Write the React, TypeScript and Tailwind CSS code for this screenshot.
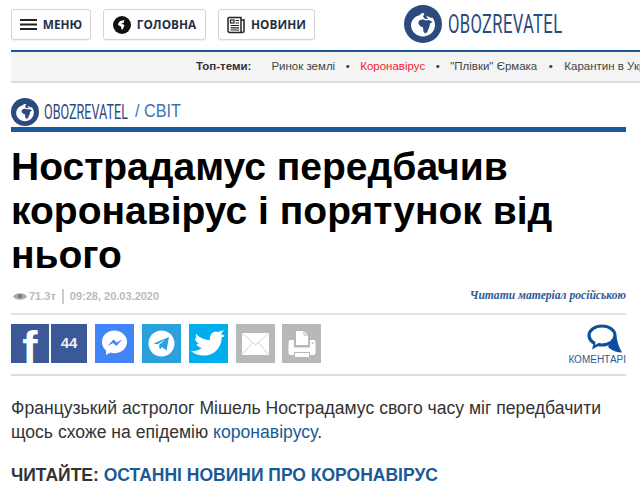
const arial = "font-['Liberation_Sans',Arial,sans-serif]"

function GlobeLogo({ className }: { className: string }) {
  return (
    <svg viewBox="0 0 38 38" className={className}>
      <circle cx="19" cy="19" r="19" fill="#2b4a7d" />
      <path
        d="M12 11.500c-3 2-5 5-5 8.500 0 6.500 5.500 11.500 12 11.500s12-5 12-11.500c0-3-1-5.500-2.800-7.500-1.200.5-2 .5-2.700-.5-1.500-.2-2.500-1-3-2.500-1.500 0-2.500-.5-3-1.500-1.500 0-3 .5-3.500 2-1.500.5-2.500 1-4 1.500z"
        fill="#fff"
      />
      <path
        d="M14.500 17c1-2.500 3.500-2.500 5-2.500l2 1 3.500-.5 3.500 2-2.500 1.500-.5 3-2.500 6-2 .8-1.500-1.500-.5-4.500-2.500-.8-2-2.500z"
        fill="#2b4a7d"
      />
      <path d="M19 11.500l2-3 2.500 1-1 2.500 2 1.500-3.500.5z" fill="#2b4a7d" />
    </svg>
  )
}

function NewspaperIcon() {
  return (
    <svg viewBox="0 0 18 18" className="w-[18px] h-[18px]" fill="none" stroke="#222" strokeWidth="1.500">
      <path d="M2 1.500h12v13.500a1.500 1.500 0 0 0 1.500 1.500H3a2 2 0 0 1-2-2V2.500a1 1 0 0 1 1-1z" />
      <path d="M14 4h3v11a1.500 1.500 0 0 1-1.500 1.500" />
      <rect x="3.500" y="4" width="3.500" height="3" strokeWidth="1.200" />
      <path d="M8.500 4.500h3.500M8.500 7h3.500M3.500 9.500h8.500M3.500 11.800h8.500M3.500 14h8.500" strokeWidth="1.200" />
    </svg>
  )
}

function NavButton({ width, icon, label }: { width: string; icon: React.ReactNode; label: string }) {
  return (
    <div className={`${width} h-[31px] flex items-center justify-center gap-[6px] border border-[#d4d4d4] rounded-[3px] bg-white text-[11.800px] font-bold text-[#1f2f45] font-['Open_Sans',sans-serif] shadow-[0_1px_1px_rgba(0,0,0,0.06)]`}>
      {icon}
      <span>{label}</span>
    </div>
  )
}

function ShareTile({ bg, width = 'w-[39px]', children }: { bg: string; width?: string; children: React.ReactNode }) {
  return <div className={`${bg} ${width} h-[39px] flex items-center justify-center overflow-hidden`}>{children}</div>
}

export default function App() {
  return (
    <div className={`w-[640px] h-[497px] overflow-hidden bg-white ${arial}`}>
      <header className="h-[50px] pl-[11px] pt-[9px] flex items-start">
        <div className="flex gap-[12px]">
          <NavButton
            width="w-[80px]"
            icon={
              <svg viewBox="0 0 17 11" className="w-[17px] h-[11px]" fill="#222">
                <rect width="17" height="2" />
                <rect y="4.500" width="17" height="2" />
                <rect y="9" width="17" height="2" />
              </svg>
            }
            label="МЕНЮ"
          />
          <NavButton
            width="w-[103px]"
            icon={
              <svg viewBox="0 0 18 18" className="w-[18px] h-[18px]">
                <circle cx="9" cy="9" r="9" fill="#111" />
                <path d="M5 9c0-2.500 2-4.500 5-4.500l1.500-1-1 3.500-2.500.5 3.500 1.500-1.500 4-1.500.5-.5-3z" fill="#fff" />
              </svg>
            }
            label="ГОЛОВНА"
          />
          <NavButton width="w-[97px]" icon={<NewspaperIcon />} label="НОВИНИ" />
        </div>
        <div className="ml-[89px] -mt-[4px] flex items-center gap-[6px]">
          <GlobeLogo className="w-[38px] h-[38px] shrink-0" />
          <span className="block w-[114px] text-[26px] leading-[38px] text-[#2b4a7d] font-['Roboto',sans-serif] tracking-[0.5px] origin-left scale-x-[0.64] whitespace-nowrap">
            OBOZREVATEL
          </span>
        </div>
      </header>

      <nav className="ml-[11px] h-[33px] border-t-2 border-t-[#1a5a96] border-b-2 border-b-[#dedede] bg-[#f4f4f4] flex items-center pl-[185px] text-[11.500px] text-[#444] whitespace-nowrap overflow-hidden">
        <span className="font-bold text-[#333] mr-[20px]">Топ-теми:</span>
        <span>Ринок землі</span>
        <span className="mx-[10.500px] text-[#333]">•</span>
        <span className="text-[#f5222d]">Коронавірус</span>
        <span className="mx-[10.500px] text-[#333]">•</span>
        <span>"Плівки" Єрмака</span>
        <span className="mx-[11.500px] text-[#333]">•</span>
        <span>Карантин в Україні</span>
      </nav>

      <main className="pr-[14px] pl-[11px]">
        <div className="mt-[13px] h-[31px] flex items-center">
          <GlobeLogo className="w-[28px] h-[28px] shrink-0" />
          <span className="ml-[5px] block w-[86px] text-[20px] text-[#2b4a7d] font-['Roboto',sans-serif] origin-left scale-x-[0.63] whitespace-nowrap">
            OBOZREVATEL
          </span>
          <span className="ml-[5px] block w-[45px] text-[18px] text-[#3f74b0] origin-left scale-x-[0.9] whitespace-nowrap">
            / СВІТ
          </span>
        </div>
        <div className="h-[5px] bg-[#1a5a96]" />

        <h1 className="mt-[13px] text-[39px] leading-[44px] font-bold text-black">
          Нострадамус передбачив коронавірус і порятунок від нього
        </h1>

        <div className="mt-[10px] flex items-center justify-between h-[18px]">
          <div className="flex items-center text-[11px] font-bold text-[#bbb]">
            <svg viewBox="0 0 16 10" className="w-[14px] h-[9px] ml-[2px] mr-[2px]">
              <path d="M0 5c3-5 13-5 16 0-3 5-13 5-16 0z" fill="#aaa" />
              <circle cx="8" cy="4.500" r="2.500" fill="#777" />
            </svg>
            <span>71.3т</span>
            <span className="mx-[6px] w-[2px] h-[15px] bg-[#ccc]" />
            <span>09:28, 20.03.2020</span>
          </div>
          <span className="font-['Liberation_Serif',serif] italic font-bold text-[11.600px] text-[#2b5a94]">
            Читати матеріал російською
          </span>
        </div>

        <div className="mt-[8px] border-t-2 border-[#e2e2e2] pt-[9px] pb-[11px] flex items-start border-b-2 border-b-[#dedede]">
          <ShareTile bg="bg-[#3b5998]" width="w-[38px] mr-[2px]">
            <span className="font-bold text-[46px] leading-[39px] text-white translate-y-[5px]">f</span>
          </ShareTile>
          <ShareTile bg="bg-[#3b5998]" width="w-[36px] mr-[8px]">
            <span className="font-bold text-[15px] text-[#f0f0f0]">44</span>
          </ShareTile>
          <ShareTile bg="bg-[#4285f8]" width="w-[39px] mr-[8px]">
            <svg viewBox="0 0 39 39" className="w-[39px] h-[39px]">
              <path d="M19.500 6.500C12 6.500 7 11.700 7 18c0 3.500 1.500 6.500 4 8.500l.2 4.500 4.300-2.400c1.300.4 2.600.6 4 .6 7 0 12.500-5 12.500-11.200S26.500 6.500 19.500 6.500z" fill="#fff" />
              <path d="M12.500 22l6-6.500 3.200 3 5.800-3.200-6.200 6.700-3.200-3z" fill="#4285f8" />
            </svg>
          </ShareTile>
          <ShareTile bg="bg-[#2aa0dc]" width="w-[39px] mr-[8px]">
            <svg viewBox="0 0 39 39" className="w-[39px] h-[39px]">
              <circle cx="19.500" cy="19.500" r="13" fill="#fff" />
              <path d="M11.500 19.500l15.500-6.500-2.500 13.500-4.500-3.500-2.200 2.500-.8-4.500 6.500-5.500-8 4.800z" fill="#2aa0dc" />
            </svg>
          </ShareTile>
          <ShareTile bg="bg-[#00aeef]" width="w-[39px] mr-[8px]">
            <svg viewBox="0 0 39 39" className="w-[39px] h-[39px]">
              <path
                d="M7 10C11 14 16 16 21 16C20 10 25 6 29 8L35 6L32 10L36 12L32.500 13.500C33 22 26 32 15 31.500C10 31.500 5 30 2 27C6 27 10 26.500 13 24C10 23.500 8 22 7.500 20L10 20C7 18 6 16 6 14L8 15C6.500 13 6.500 11 7 10Z"
                fill="#fff"
              />
            </svg>
          </ShareTile>
          <ShareTile bg="bg-[#b8b8b8]" width="w-[39px] mr-[7px]">
            <svg viewBox="0 0 27 22" className="w-[27px] h-[22px]">
              <rect width="27" height="22" rx="1" fill="#fff" />
              <path d="M1 1l12.500 11L26 1M1 21l9-11M26 21l-9-11" fill="none" stroke="#d8d4c8" strokeWidth="1" />
            </svg>
          </ShareTile>
          <ShareTile bg="bg-[#b8b8b8]" width="w-[39px]">
            <svg viewBox="0 0 39 39" className="w-[39px] h-[39px]">
              <path d="M14 7h8l4 4v10H14z" fill="#fff" />
              <path d="M22 7v4h4" fill="none" stroke="#b8b8b8" strokeWidth="1" />
              <path d="M8.500 16H12v7.500h16V16h3.500a2 2 0 0 1 2 2v11a2 2 0 0 1-2 2H28v-3H12v3H8.500a2 2 0 0 1-2-2V18a2 2 0 0 1 2-2z" fill="#fff" />
              <rect x="13" y="29" width="14" height="4" fill="#fff" />
              <circle cx="30.500" cy="19" r="1" fill="#b8b8b8" />
            </svg>
          </ShareTile>
          <div className="ml-auto flex flex-col items-end -mb-[2px]">
            <svg viewBox="0 0 36 30" className="w-[36px] h-[30px] mr-[3px]">
              <path d="M25 10c2 0 3.500 1 4.500 2 .5 5 2 10 5.500 16.500-4.500 0-9-1.500-13-4.500l-1-2c3.500-2 5-6 4-12z" fill="#0d4f9e" />
              <ellipse cx="15" cy="11.500" rx="13" ry="9.500" fill="#fff" stroke="#0d4f9e" strokeWidth="3.200" />
              <path d="M7 17.500l-2 8 9-5z" fill="#0d4f9e" />
              <path d="M8.500 17.500l-.5 3.500 4.500-2.500z" fill="#fff" />
            </svg>
            <span className="text-[10px] leading-[11px] text-[#2b5a94]">КОМЕНТАРІ</span>
          </div>
        </div>

        <p className="mt-[20px] text-[17.600px] leading-[24px] text-[#333]">
          Французький астролог Мішель Нострадамус свого часу міг передбачити щось схоже на епідемію{' '}
          <span className="text-[#1a5a96]">коронавірусу</span>.
        </p>

        <p className="mt-[19px] text-[17.500px] leading-[24px] font-bold text-[#333]">
          ЧИТАЙТЕ: <span className="text-[#1a5a96]">ОСТАННІ НОВИНИ ПРО КОРОНАВІРУС</span>
        </p>
      </main>
    </div>
  )
}
